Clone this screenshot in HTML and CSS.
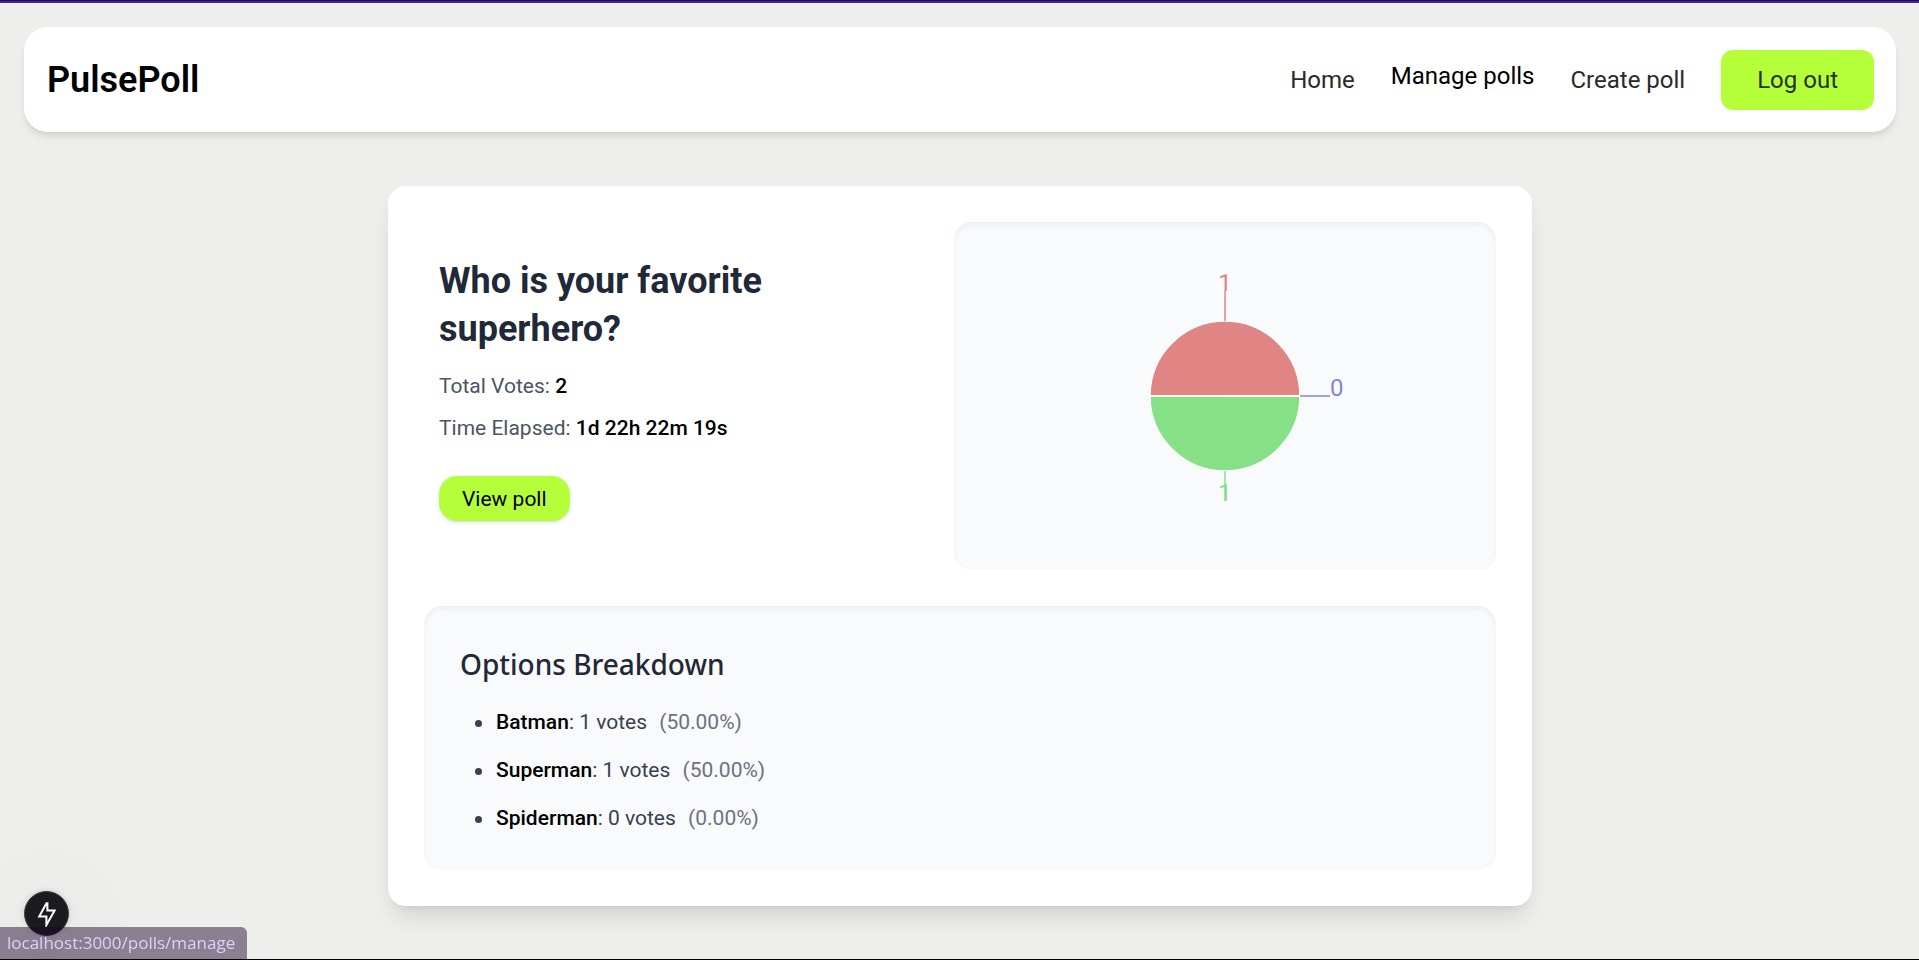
FILE: index.html
```html
<!DOCTYPE html>
<html lang="en">
<head>
<meta charset="utf-8">
<meta name="viewport" content="width=device-width, initial-scale=1">
<title>PulsePoll</title>
<link rel="stylesheet" href="styles.css">
</head>
<body>
<header class="navbar">
  <div class="brand">PulsePoll</div>
  <nav class="nav">
    <a class="nav-link" href="#">Home</a>
    <a class="nav-link nav-link-active" href="#">Manage polls</a>
    <a class="nav-link" href="#">Create poll</a>
    <button class="logout" type="button">Log out</button>
  </nav>
</header>

<main class="card">
  <section class="overview">
    <div class="summary">
      <h1 class="question">Who is your favorite superhero?</h1>
      <p class="stat">Total Votes: <span class="stat-value">2</span></p>
      <p class="stat">Time Elapsed: <span class="stat-value">1d 22h 22m 19s</span></p>
      <button class="view" type="button">View poll</button>
    </div>
    <div class="panel chart">
      <svg class="pie" width="300" height="300" viewBox="0 0 300 300" role="img" aria-label="Votes per option">
        <g stroke="#fff" stroke-width="1.5">
          <path fill="#e08484" d="M150 150H225A75 75 0 0 0 75 150Z"/>
          <path fill="#86e086" d="M150 150H75A75 75 0 0 0 225 150Z"/>
          <path d="M150 150H225"/>
        </g>
        <g fill="none" stroke-width="2">
          <path stroke="#e8a0a4" d="M150 75V45"/>
          <path stroke="#a4e8a4" d="M150 225V255"/>
          <path stroke="#a4a0e8" d="M225 150H255"/>
        </g>
        <g class="pie-labels">
          <text x="150" y="45" text-anchor="middle" fill="#e08484">1</text>
          <text x="150" y="255" text-anchor="middle" fill="#86e086">1</text>
          <text x="255" y="150" fill="#8884d8">0</text>
        </g>
      </svg>
    </div>
  </section>

  <section class="panel breakdown">
    <h2 class="breakdown-title">Options Breakdown</h2>
    <ul class="options">
      <li class="option"><span class="option-name">Batman</span>: 1 votes <span class="percent">(50.00%)</span></li>
      <li class="option"><span class="option-name">Superman</span>: 1 votes <span class="percent">(50.00%)</span></li>
      <li class="option"><span class="option-name">Spiderman</span>: 0 votes <span class="percent">(0.00%)</span></li>
    </ul>
  </section>
</main>

<button class="dev-badge" type="button" aria-label="Static route">
  <svg width="24" height="26" viewBox="0 0 24 26" fill="none" stroke="#fff" stroke-width="2" stroke-linejoin="miter">
    <path d="M11.5 2.2 4.2 15.6H11.4V24L19.6 9.6H12.4V2.2Z"/>
  </svg>
</button>
<div class="status">localhost:3000/polls/manage</div>
</body>
</html>
```
FILE: styles.css
```css
* {
  box-sizing: border-box;
}

body {
  margin: 0;
  min-height: 100vh;
  padding: 24px 23px 24px 24px;
  border-top: 3px solid #46208c;
  border-bottom: 1px solid #000;
  background: #eeeeec;
  color: #000;
  font-family: Roboto, "Open Sans", sans-serif;
  font-size: 21px;
}

/* dark hairline along the window's upper edge */
body::before {
  content: "";
  position: fixed;
  inset: 0 0 auto;
  height: 1px;
  background: #1e0a5a;
}

button {
  border: 0;
  font: inherit;
  cursor: pointer;
}

h1, h2, p, ul {
  margin: 0;
}

.navbar {
  display: flex;
  align-items: center;
  justify-content: space-between;
  padding: 23px 22px 22px 23px;
  border-radius: 24px;
  background: #fff;
  box-shadow: 0 6px 9px -2px rgba(0, 0, 0, 0.1), 0 3px 6px -3px rgba(0, 0, 0, 0.1);
}

.brand {
  font-size: 36px;
  font-weight: 600;
}

.nav {
  display: flex;
  align-items: center;
  gap: 36px;
  font-size: 24px;
}

.nav-link {
  color: #2a2a2a;
  text-decoration: none;
}

.nav-link-active {
  color: #000;
  transform: translateY(-4px);
}

.logout {
  height: 60px;
  padding: 0 36px;
  border-radius: 12px;
  background: #b4ff39;
  color: #243308;
}

.card {
  display: grid;
  gap: 36px;
  max-width: 1144px;
  margin: 54px auto 0;
  padding: 36px;
  border-radius: 18px;
  background: #fff;
  box-shadow: 0 15px 22px -4px rgba(0, 0, 0, 0.1), 0 6px 9px -6px rgba(0, 0, 0, 0.1);
}

.overview {
  display: grid;
  grid-template-columns: 494fr 542fr;
  gap: 36px;
}

.summary {
  padding: 35px 15px;
}

.question {
  margin-bottom: 18px;
  color: #1f2937;
  font-size: 36px;
  font-weight: 700;
  line-height: 48px;
}

.stat {
  margin-bottom: 12px;
  color: #4b5563;
  line-height: 30px;
}

.stat-value {
  color: #000;
  font-weight: 500;
}

.view {
  height: 45px;
  margin-top: 21px;
  padding: 0 23px;
  border-radius: 18px;
  background: #b4ff39;
  color: #000;
  box-shadow: 0 2px 4px rgba(0, 0, 0, 0.1), 0 2px 3px -2px rgba(0, 0, 0, 0.1);
}

.panel {
  border-radius: 18px;
  background: #f9fafb;
  box-shadow: inset 0 3px 6px rgba(0, 0, 0, 0.05);
}

.chart {
  display: flex;
  align-items: center;
  justify-content: center;
  padding: 24px;
}

.pie-labels {
  font-size: 24px;
}

.breakdown {
  padding: 36px;
}

.breakdown-title {
  margin-bottom: 21px;
  color: #1f2937;
  font-family: "Noto Sans", "Open Sans", sans-serif;
  font-size: 28px;
  font-weight: 500;
  line-height: 44px;
}

.options {
  display: grid;
  gap: 17px;
  padding-left: 36px;
  color: #374151;
  line-height: 31px;
  list-style: none;
}

.option::before {
  content: "";
  display: inline-block;
  width: 7px;
  height: 7px;
  margin: 0 14px 0 -21px;
  border-radius: 50%;
  background: currentColor;
  vertical-align: middle;
}

.option-name {
  color: #000;
  font-weight: 500;
}

.percent {
  margin-left: 7px;
  color: #6b7280;
}

.dev-badge {
  position: fixed;
  left: 24px;
  bottom: 24px;
  display: grid;
  place-items: center;
  width: 45px;
  height: 45px;
  padding: 0;
  border: 1px solid #3a3b3c;
  border-radius: 50%;
  background: #1b1b1d;
  box-shadow: 0 0 6px rgba(0, 0, 0, 0.15), 0 12px 90px rgba(0, 0, 0, 0.12);
}

.status {
  position: fixed;
  left: 0;
  bottom: 1px;
  padding: 0 12px 0 7px;
  border-top-right-radius: 6px;
  background: rgba(27, 5, 45, 0.47);
  color: #ddd0f5;
  font-family: "Open Sans", "Noto Sans", sans-serif;
  font-size: 17px;
  line-height: 32px;
}
```
